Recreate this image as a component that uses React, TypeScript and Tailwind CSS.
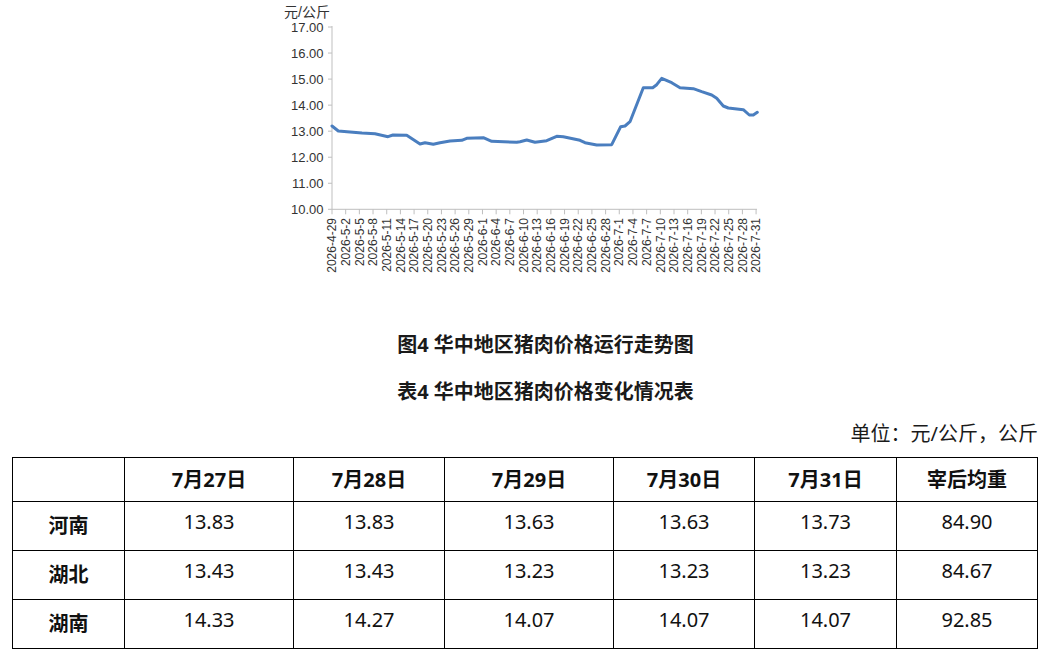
import React from "react";

const points: [number, number][] = [
  [332, 126], [338.3, 131], [350, 132], [362, 133], [375, 133.7], [388, 136.7],
  [393, 135], [406.7, 135.3], [420, 144], [425, 142.7], [433.3, 144.3], [440, 142.7],
  [450, 141], [461.7, 140.3], [466.7, 138.3], [483.3, 137.7], [491.7, 141.3],
  [516.7, 142.3], [520, 141.7], [526.7, 140], [535, 142.3], [546.7, 140.7],
  [556.7, 136.3], [563.3, 136.7], [580, 140.3], [585, 142.7], [596.7, 145],
  [611.7, 144.7], [620.7, 126.7], [625, 126], [630, 121.7], [643.3, 87.7],
  [652.7, 87.7], [656.7, 84.7], [661.7, 78.3], [671.7, 82.7], [680, 87.7],
  [693.3, 88.7], [701.7, 91.7], [711.7, 95], [716.7, 98.3], [723.3, 106],
  [728.3, 108], [743.3, 109.7], [749.3, 115], [753.3, 115], [757.3, 112.3],
];

// one label every 3 days, 2026-4-29 .. 2026-7-31
const dates: string[] = [];
{
  const d = new Date(2026, 3, 29);
  for (let i = 0; i < 32; i++) {
    dates.push(`2026-${d.getMonth() + 1}-${d.getDate()}`);
    d.setDate(d.getDate() + 3);
  }
}

const AXIS_X = 332;
const AXIS_Y = 209.3;
const STEP_Y = 26.04;
const STEP_X = 13.68;

function PriceChart() {
  const font = '"Liberation Sans", "Noto Sans CJK SC", sans-serif';
  return (
    <svg
      width={500}
      height={290}
      viewBox="270 0 500 290"
      className="ml-[270px] block"
      fontFamily={font}
    >
      <text x={284} y={17} fontSize={14} fill="#333">
        元/公斤
      </text>

      {/* y axis */}
      <line x1={AXIS_X} y1={26} x2={AXIS_X} y2={AXIS_Y} stroke="#bfbfbf" strokeWidth={1} />
      {[10, 11, 12, 13, 14, 15, 16, 17].map((v) => {
        const y = AXIS_Y - (v - 10) * STEP_Y;
        return (
          <g key={v}>
            <line x1={AXIS_X - 4} y1={y} x2={AXIS_X} y2={y} stroke="#bfbfbf" />
            <text x={323.5} y={y + 4.6} fontSize={13} fill="#333" textAnchor="end">
              {v.toFixed(2)}
            </text>
          </g>
        );
      })}

      {/* x axis */}
      <line x1={AXIS_X} y1={AXIS_Y} x2={757} y2={AXIS_Y} stroke="#bfbfbf" strokeWidth={1} />
      {dates.map((label, i) => {
        const x = AXIS_X + i * STEP_X;
        return (
          <g key={label}>
            <line x1={x} y1={AXIS_Y} x2={x} y2={AXIS_Y + 5} stroke="#bfbfbf" />
            <text
              x={x + 4.2}
              y={218}
              fontSize={12}
              fill="#333"
              textAnchor="end"
              transform={`rotate(-90 ${x + 4.2} 218)`}
            >
              {label}
            </text>
          </g>
        );
      })}

      <polyline
        points={points.map((p) => p.join(",")).join(" ")}
        fill="none"
        stroke="#4a7ebf"
        strokeWidth={3}
        strokeLinejoin="round"
        strokeLinecap="round"
      />
    </svg>
  );
}

const headers = ["7月27日", "7月28日", "7月29日", "7月30日", "7月31日", "宰后均重"];

const rows = [
  { name: "河南", values: ["13.83", "13.83", "13.63", "13.63", "13.73", "84.90"] },
  { name: "湖北", values: ["13.43", "13.43", "13.23", "13.23", "13.23", "84.67"] },
  { name: "湖南", values: ["14.33", "14.27", "14.07", "14.07", "14.07", "92.85"] },
];

const colWidths = ["w-[112px]", "w-[169px]", "w-[151px]", "w-[169px]", "w-[141px]", "w-[142px]", "w-[141px]"];

export default function App() {
  return (
    <div className="w-[1053px] h-[653px] overflow-hidden bg-white text-[#111] font-['Noto_Sans','Noto_Sans_CJK_SC',sans-serif]">
      <PriceChart />

      <div className="mt-[41px] pl-[38px] text-center text-[20px] leading-[28px] font-bold text-[#1a1a1a]">
        图4 华中地区猪肉价格运行走势图
      </div>
      <div className="mt-[19px] pl-[38px] text-center text-[20px] leading-[28px] font-bold text-[#1a1a1a]">
        表4 华中地区猪肉价格变化情况表
      </div>

      <div className="mt-[14px] w-[1038px] text-right text-[20px] leading-[28px] text-[#1a1a1a]">
        单位：元/公斤，公斤
      </div>

      <table className="mt-[9px] ml-[12px] w-[1026px] table-fixed border-collapse text-[20px]">
        <colgroup>
          {colWidths.map((w, i) => (
            <col key={i} className={w} />
          ))}
        </colgroup>
        <thead>
          <tr className="h-[44px]">
            <th className="border border-black" />
            {headers.map((h) => (
              <th key={h} className="border border-black text-center font-bold">
                {h}
              </th>
            ))}
          </tr>
        </thead>
        <tbody>
          {rows.map((row) => (
            <tr key={row.name} className="h-[49px]">
              <td className="border border-black text-center font-bold">{row.name}</td>
              {row.values.map((v, i) => (
                <td key={i} className="border border-black text-center pb-[9px]">
                  {v}
                </td>
              ))}
            </tr>
          ))}
        </tbody>
      </table>
    </div>
  );
}
